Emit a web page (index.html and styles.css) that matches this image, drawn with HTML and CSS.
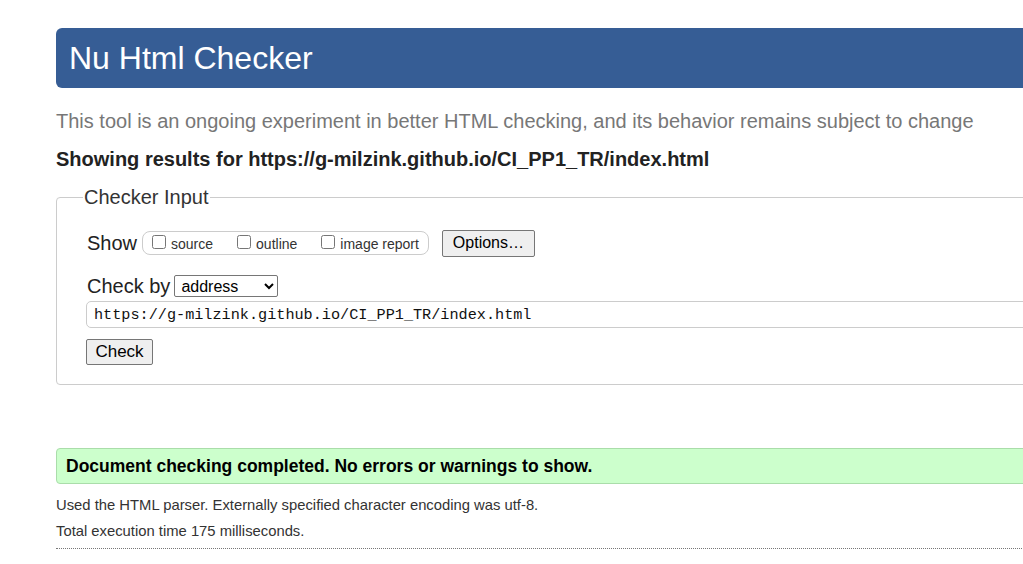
FILE: index.html
```html
<!DOCTYPE html>
<html lang="en">
<head>
<meta charset="utf-8">
<title>Showing results for https://g-milzink.github.io/CI_PP1_TR/index.html - Nu Html Checker</title>
<link rel="stylesheet" href="styles.css">
</head>
<body>
<div class="page">
  <h1 class="banner">Nu Html Checker</h1>
  <p class="intro">This tool is an ongoing experiment in better HTML checking, and its behavior remains subject to change</p>
  <p class="showing">Showing results for https://g-milzink.github.io/CI_PP1_TR/index.html</p>
  <form class="checker">
    <fieldset class="input-box">
      <legend class="legend">Checker Input</legend>
      <div class="row show-row">
        <span class="row-label">Show</span>
        <span class="opts">
          <label class="opt"><input type="checkbox" class="cb">source</label>
          <label class="opt"><input type="checkbox" class="cb">outline</label>
          <label class="opt"><input type="checkbox" class="cb">image report</label>
        </span>
        <button type="button" class="btn options-btn">Options…</button>
      </div>
      <div class="row by-row">
        <span class="row-label">Check by</span>
        <select class="sel"><option>address</option></select>
      </div>
      <div class="url-field">https://g-milzink.github.io/CI_PP1_TR/index.html</div>
      <button type="button" class="btn check-btn">Check</button>
    </fieldset>
  </form>
  <p class="success">Document checking completed. No errors or warnings to show.</p>
  <p class="details first">Used the HTML parser. Externally specified character encoding was utf-8.</p>
  <p class="details">Total execution time 175 milliseconds.</p>
  <hr class="rule">
</div>
</body>
</html>
```

FILE: styles.css
```css
html, body {
  margin: 0;
  padding: 0;
  background: #fff;
  overflow: hidden;
}
body {
  font-family: "Liberation Sans", Arial, sans-serif;
  color: #222;
}
.page {
  width: 1300px;
  margin-left: 56px;
  padding-top: 28px;
}
.banner {
  margin: 0;
  height: 60px;
  box-sizing: border-box;
  padding-left: 13px;
  display: flex;
  align-items: center;
  background: #365d95;
  color: #fff;
  font-weight: normal;
  font-size: 32px;
  border-radius: 6px;
}
.intro {
  margin: 20px 0 0;
  font-size: 20px;
  line-height: 26px;
  color: #777;
}
.showing {
  margin: 12px 0 0;
  font-size: 20px;
  line-height: 26px;
  font-weight: bold;
  color: #222;
}
.checker {
  margin: 0;
}
.input-box {
  margin: 14px 0 0;
  padding: 20px 30px 19px;
  border: 1px solid #ccc;
  border-radius: 4px;
}
.legend {
  padding: 0 1px;
  margin-left: -4px;
  font-size: 20px;
  color: #333;
}
.row {
  display: flex;
  align-items: center;
}
.row-label {
  font-size: 20px;
  color: #222;
  margin-right: 5px;
}
.show-row {
  height: 28px;
}
.opts {
  display: flex;
  align-items: center;
  height: 22px;
  padding: 0 9px 0 9px;
  border: 1px solid #ccc;
  border-radius: 8px;
}
.opt {
  display: flex;
  align-items: center;
  font-size: 14px;
  color: #333;
  margin-right: 24px;
  padding-top: 2px;
}
.opt:last-child {
  margin-right: 0;
}
.cb {
  margin: 0 5px 4px 0;
  width: 14px;
  height: 14px;
}
.btn {
  font-family: "Liberation Sans", Arial, sans-serif;
  background: #efefef;
  border: 1px solid #767676;
  border-radius: 2px;
  color: #000;
  padding: 0 9px;
}
.options-btn {
  margin-left: 13px;
  height: 27px;
  width: 93px;
  font-size: 16px;
}
.by-row {
  margin-top: 17px;
  height: 24px;
}
.by-row .row-label {
  margin-right: 4px;
}
.sel {
  width: 104px;
  height: 22px;
  font-family: "Liberation Sans", Arial, sans-serif;
  font-size: 16px;
  color: #000;
  border: 1px solid #767676;
  border-radius: 2px;
  background: #fff;
  padding: 0 2px;
}
.url-field {
  margin: 3px 0 0 -1px;
  height: 27px;
  box-sizing: border-box;
  border: 1px solid #ccc;
  border-radius: 5px;
  padding: 0 7px;
  display: flex;
  align-items: center;
  font-family: "Liberation Mono", "DejaVu Sans Mono", monospace;
  font-size: 15.2px;
  color: #111;
}
.check-btn {
  display: block;
  margin: 11px 0 0 -1px;
  height: 26px;
  width: 67px;
  font-size: 17px;
  padding: 0;
}
.success {
  margin: 63px 0 0;
  height: 36px;
  box-sizing: border-box;
  display: flex;
  align-items: center;
  padding-left: 9px;
  background: #ccffcc;
  border: 1px solid #aaddaa;
  border-radius: 4px;
  font-weight: bold;
  font-size: 17.5px;
  color: #000;
}
.details {
  margin: 10px 0 0;
  font-size: 14.8px;
  line-height: 16px;
  color: #333;
}
.details.first {
  margin-top: 13px;
}
.rule {
  margin: 9px 0 0;
  border: none;
  border-top: 1px dotted #777;
  height: 0;
}
```
